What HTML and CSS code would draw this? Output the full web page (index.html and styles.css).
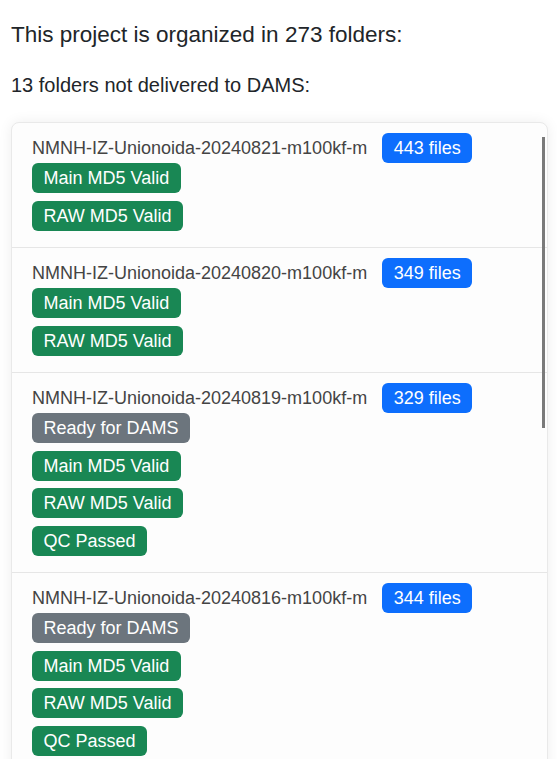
FILE: index.html
```html
<!DOCTYPE html>
<html lang="en">
<head>
<meta charset="utf-8">
<title>Project folders</title>
<link rel="stylesheet" href="styles.css">
</head>
<body>
<main class="page">
  <h2 class="title">This project is organized in 273 folders:</h2>
  <h3 class="subtitle">13 folders not delivered to DAMS:</h3>
  <div class="card">
    <ul class="list">
      <li class="item">
        <div class="row"><span class="name">NMNH-IZ-Unionoida-20240821-m100kf-m</span><span class="badge blue">443 files</span></div>
        <div class="badges">
          <span class="badge green">Main MD5 Valid</span>
          <span class="badge green">RAW MD5 Valid</span>
        </div>
      </li>
      <li class="item">
        <div class="row"><span class="name">NMNH-IZ-Unionoida-20240820-m100kf-m</span><span class="badge blue">349 files</span></div>
        <div class="badges">
          <span class="badge green">Main MD5 Valid</span>
          <span class="badge green">RAW MD5 Valid</span>
        </div>
      </li>
      <li class="item">
        <div class="row"><span class="name">NMNH-IZ-Unionoida-20240819-m100kf-m</span><span class="badge blue">329 files</span></div>
        <div class="badges">
          <span class="badge gray">Ready for DAMS</span>
          <span class="badge green">Main MD5 Valid</span>
          <span class="badge green">RAW MD5 Valid</span>
          <span class="badge green">QC Passed</span>
        </div>
      </li>
      <li class="item">
        <div class="row"><span class="name">NMNH-IZ-Unionoida-20240816-m100kf-m</span><span class="badge blue">344 files</span></div>
        <div class="badges">
          <span class="badge gray">Ready for DAMS</span>
          <span class="badge green">Main MD5 Valid</span>
          <span class="badge green">RAW MD5 Valid</span>
          <span class="badge green">QC Passed</span>
        </div>
      </li>
      <li class="item">
        <div class="row"><span class="name">NMNH-IZ-Unionoida-20240815-m100kf-m</span><span class="badge blue">312 files</span></div>
        <div class="badges">
          <span class="badge green">Main MD5 Valid</span>
          <span class="badge green">RAW MD5 Valid</span>
        </div>
      </li>
    </ul>
    <div class="thumb"></div>
  </div>
</main>
</body>
</html>
```
FILE: styles.css
```css
html, body {
  margin: 0;
  padding: 0;
  height: 100%;
  overflow: hidden;
  background: #fff;
}
body {
  font-family: "Liberation Sans", Arial, sans-serif;
  color: #212529;
}
.page {
  padding: 21px 9px 0 11px;
}
.title {
  margin: 0;
  font-size: 22.5px;
  line-height: 27px;
  font-weight: 400;
}
.subtitle {
  margin: 25px 0 0;
  font-size: 20px;
  line-height: 24px;
  font-weight: 400;
}
.card {
  position: relative;
  margin-top: 25px;
  height: 700px;
  border: 1px solid #e9e9e9;
  border-radius: 8px;
  background: #fdfdfd;
  box-shadow: 0 0 14px rgba(0, 0, 0, 0.07);
  overflow: hidden;
}
.list {
  list-style: none;
  margin: 0;
  padding: 0;
}
.item {
  padding: 10px 20px 10px;
  border-bottom: 1px solid #e6e6e6;
}
.row {
  font-size: 18px;
  line-height: 27px;
  color: #444;
}
.name {
  margin-right: 15px;
}
.badges {
  display: flex;
  flex-direction: column;
  align-items: flex-start;
  gap: 7.5px;
  padding-bottom: 6.5px;
}
.badge {
  display: inline-block;
  font-size: 18px;
  line-height: 1;
  padding: 6px 11.5px;
  border-radius: 6px;
  color: #fff;
  white-space: nowrap;
}
.blue { background: #0d6efd; }
.green { background: #198754; }
.gray { background: #6c757d; }
.thumb {
  position: absolute;
  top: 14px;
  right: 2px;
  width: 3px;
  height: 291px;
  background: #7a7a7a;
}
```
